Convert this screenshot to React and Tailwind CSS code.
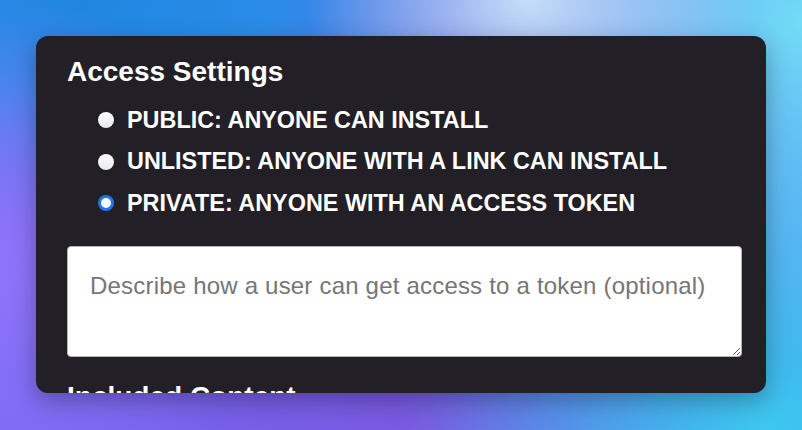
import React, { useState } from 'react';

const options = [
  { id: 'public', label: 'PUBLIC: ANYONE CAN INSTALL' },
  { id: 'unlisted', label: 'UNLISTED: ANYONE WITH A LINK CAN INSTALL' },
  { id: 'private', label: 'PRIVATE: ANYONE WITH AN ACCESS TOKEN' },
];

function Radio({ checked }) {
  if (checked) {
    return (
      <span className="flex h-[16px] w-[16px] items-center justify-center rounded-full bg-[#1f74f0]">
        <span className="h-[10px] w-[10px] rounded-full bg-white" />
      </span>
    );
  }
  return <span className="h-[16px] w-[16px] rounded-full bg-gradient-to-b from-white to-[#e8e8e8] shadow-[0_0_0_0.5px_rgba(0,0,0,0.35)]" />;
}

export default function App() {
  const [access, setAccess] = useState('private');

  return (
    <div
      className="h-[430px] w-full overflow-hidden pt-[36px] pl-[36px] font-['Liberation_Sans',Arial,sans-serif] bg-[radial-gradient(circle_at_0%_62%,#8e74fa_0,transparent_32%),radial-gradient(ellipse_at_66%_0%,#c4def8_0,transparent_30%),radial-gradient(circle_at_100%_5%,#72dcf6_0,transparent_38%),radial-gradient(circle_at_96%_100%,#3cc8ef_0,transparent_42%),radial-gradient(ellipse_60%_55%_at_10%_0%,#1f86e0_0,#2a8ce8_40%,transparent_100%),linear-gradient(to_right,#7468f2,#7a58e0_55%,#4c7ff0)]"
    >
      <div className="h-[357px] w-[730px] overflow-hidden rounded-[12px] bg-[#231f26] pt-[22px] pl-[31px] pr-[24px] shadow-[0_8px_24px_rgba(0,0,0,0.3)]">
        <h2 className="text-[28px] font-bold leading-[28px] text-white">Access Settings</h2>

        <div className="mt-[13.5px] pl-[31px]">
          {options.map((o) => (
            <label
              key={o.id}
              className="flex h-[41.5px] cursor-pointer items-center gap-[13px]"
              onClick={() => setAccess(o.id)}
            >
              <Radio checked={access === o.id} />
              <span className="text-[23.4px] font-bold leading-none text-white">{o.label}</span>
            </label>
          ))}
        </div>

        <textarea
          className="mt-[22px] block h-[111px] w-full resize-y rounded-[4px] border border-[#b5b5b5] bg-white px-[22px] pt-[25px] text-[24px] leading-[1.2] tracking-[0.2px] text-[#333] placeholder:text-[#767676] outline-none"
          placeholder="Describe how a user can get access to a token (optional)"
        />

        <h2 className="mt-[26px] text-[28px] font-bold leading-[28px] text-white">Included Content</h2>
      </div>
    </div>
  );
}
